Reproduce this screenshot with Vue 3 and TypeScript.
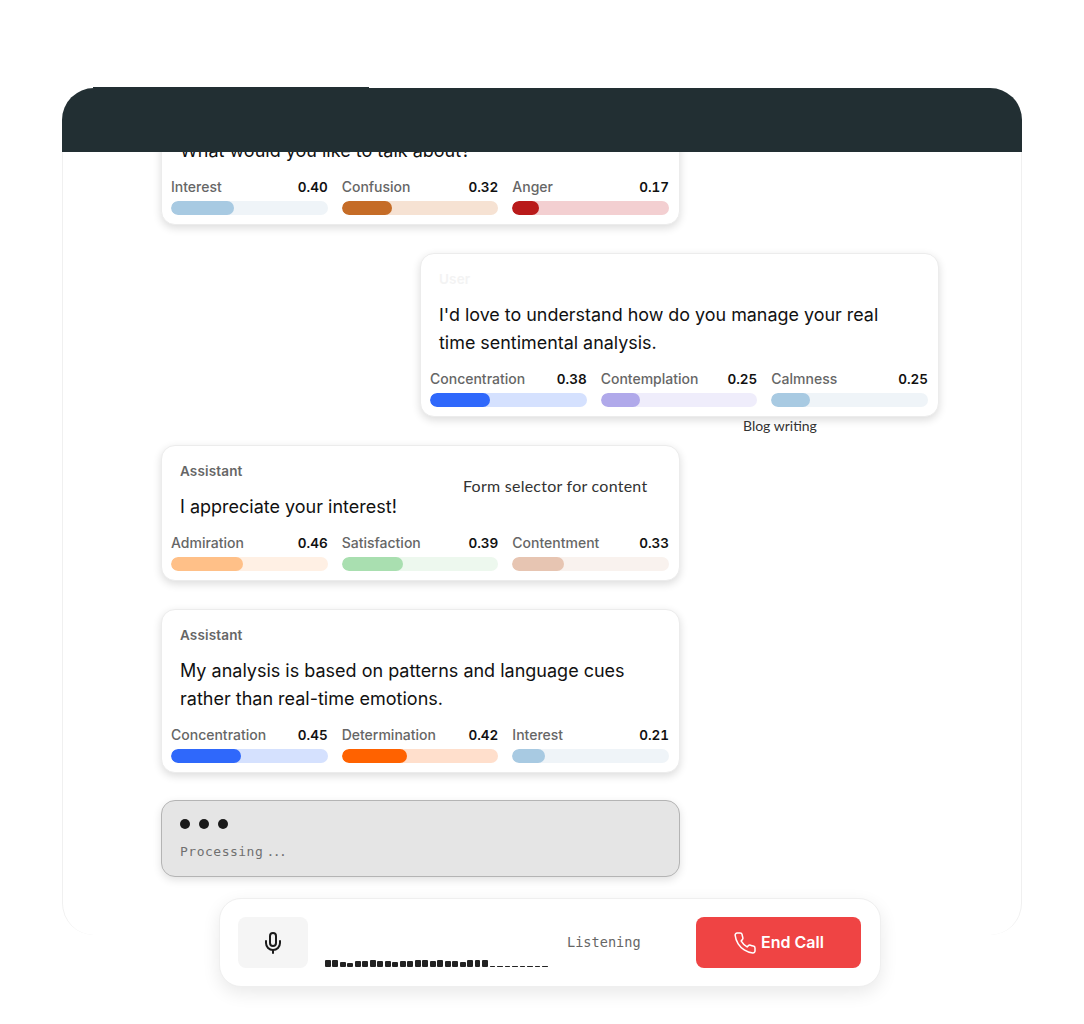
<script setup lang="ts">
interface Metric { name: string; value: number; fill: string; track: string }
interface Message { role?: string; text: string[]; user?: boolean; metrics: Metric[] }

const palette: Record<string, [string, string]> = {
  Interest: ['#a8cae2', '#eff4f8'],
  Confusion: ['#c56c27', '#f6e2d3'],
  Anger: ['#b91a1a', '#f3cfd1'],
  Concentration: ['#2f68fb', '#d5e1fe'],
  Contemplation: ['#b0a9ea', '#efedfb'],
  Calmness: ['#a8cae2', '#eff4f8'],
  Admiration: ['#ffc088', '#fff0e4'],
  Satisfaction: ['#a9dfb0', '#edf8ee'],
  Contentment: ['#e7c5b2', '#f9f2ee'],
  Determination: ['#ff6200', '#ffdfcc'],
}

const m = (name: string, value: number): Metric => ({
  name,
  value,
  fill: palette[name][0],
  track: palette[name][1],
})

const messages: Message[] = [
  {
    text: ['What would you like to talk about?'],
    metrics: [m('Interest', 0.4), m('Confusion', 0.32), m('Anger', 0.17)],
  },
  {
    role: 'User',
    user: true,
    text: ["I'd love to understand how do you manage your real", 'time sentimental analysis.'],
    metrics: [m('Concentration', 0.38), m('Contemplation', 0.25), m('Calmness', 0.25)],
  },
  {
    role: 'Assistant',
    text: ['I appreciate your interest!'],
    metrics: [m('Admiration', 0.46), m('Satisfaction', 0.39), m('Contentment', 0.33)],
  },
  {
    role: 'Assistant',
    text: ['My analysis is based on patterns and language cues', 'rather than real-time emotions.'],
    metrics: [m('Concentration', 0.45), m('Determination', 0.42), m('Interest', 0.21)],
  },
]

const wave: number[] = [7, 7, 5, 4, 6, 6, 7, 6, 6, 5, 6, 6, 7, 7, 6, 7, 6, 6, 5, 7, 7, 7, 1, 1, 1, 1, 1, 1, 1, 1]
</script>

<template>
  <div class="page">
    <div class="frame">
      <header class="head"></header>
      <div class="notch"></div>
      <div class="scroller">
        <article
          v-for="(msg, i) in messages"
          :key="i"
          class="card"
          :class="{ user: msg.user }"
        >
          <div v-if="msg.role" class="role">{{ msg.role }}</div>
          <p v-for="line in msg.text" :key="line" class="line">{{ line }}</p>
          <div class="metrics">
            <div v-for="item in msg.metrics" :key="item.name" class="metric">
              <div class="metric-top">
                <span class="metric-name">{{ item.name }}</span>
                <span class="metric-value">{{ item.value.toFixed(2) }}</span>
              </div>
              <div class="track" :style="{ background: item.track }">
                <div class="fill" :style="{ width: item.value * 100 + '%', background: item.fill }"></div>
              </div>
            </div>
          </div>
        </article>
        <div class="processing">
          <div class="dots"><i></i><i></i><i></i></div>
          <div class="processing-text">Processing <span class="ellipsis">...</span></div>
        </div>
      </div>
      <span class="tag tag-blog">Blog writing</span>
      <span class="tag tag-form">Form selector for content</span>
    </div>

    <div class="bar">
      <button class="mic" aria-label="Microphone">
        <svg width="24" height="24" viewBox="0 0 24 24" fill="none" stroke="#1c1c1c" stroke-width="2" stroke-linecap="round" stroke-linejoin="round">
          <path d="M12 2a3 3 0 0 0-3 3v7a3 3 0 0 0 6 0V5a3 3 0 0 0-3-3Z" />
          <path d="M19 10v2a7 7 0 0 1-14 0v-2" />
          <line x1="12" y1="19" x2="12" y2="22" />
        </svg>
      </button>
      <div class="wave">
        <i v-for="(h, i) in wave" :key="i" :style="{ height: h + 'px' }"></i>
      </div>
      <span class="listening">Listening</span>
      <button class="end">
        <svg width="24" height="24" viewBox="0 0 24 24" fill="none" stroke="#fff" stroke-width="1.5" stroke-linecap="round" stroke-linejoin="round">
          <path d="M22 16.92v3a2 2 0 0 1-2.18 2 19.79 19.79 0 0 1-8.63-3.07 19.5 19.5 0 0 1-6-6 19.79 19.79 0 0 1-3.07-8.67A2 2 0 0 1 4.11 2h3a2 2 0 0 1 2 1.72 12.84 12.84 0 0 0 .7 2.81 2 2 0 0 1-.45 2.11L8.09 9.91a16 16 0 0 0 6 6l1.27-1.27a2 2 0 0 1 2.11-.45 12.84 12.84 0 0 0 2.81.7A2 2 0 0 1 22 16.92Z" />
        </svg>
        <span class="end-label">End Call</span>
      </button>
    </div>
  </div>
</template>

<style>
html, body { background: #fff; }
</style>

<style scoped>
.page {
  position: relative;
  width: 1084px;
  height: 1024px;
  padding: 88px 62px 0;
  box-sizing: border-box;
  overflow: hidden;
  font-family: Inter, "Liberation Sans", sans-serif;
  color: #111;
}
.frame {
  position: relative;
  height: 847px;
  display: flex;
  flex-direction: column;
}
.head {
  flex: none;
  height: 64px;
  border-radius: 32px 32px 0 0;
  background: #222f33;
  position: relative;
  z-index: 1;
}
.notch {
  position: absolute;
  top: -1px;
  left: 31px;
  width: 276px;
  height: 1px;
  background: #222f33;
}
.scroller {
  flex: 1;
  min-height: 0;
  overflow: hidden;
  display: flex;
  flex-direction: column;
  justify-content: flex-end;
  align-items: flex-start;
  gap: 28px;
  padding: 0 0 58px 98px;
  border-left: 1px solid #f0f0f0;
  border-right: 1px solid #f0f0f0;
  border-radius: 0 0 32px 32px;
}
.card {
  flex: none;
  width: 519px;
  box-sizing: border-box;
  background: #fff;
  border: 1px solid #ececec;
  border-radius: 14px;
  padding: 15px 10px 9px 9px;
  box-shadow: 0 3px 8px rgba(0, 0, 0, 0.14);
}
.card.user { margin-left: 259px; }
.card.user .role { color: #f3f3f3; }
.card.user .line { font-size: 17.92px; }
.role {
  height: 20px;
  line-height: 20px;
  margin: 0 9px 12px;
  font-size: 13.5px;
  font-weight: 600;
  letter-spacing: 0.15px;
  color: #666;
}
.line {
  margin: 0 9px;
  font-size: 18px;
  line-height: 28px;
  color: #111;
  white-space: nowrap;
}
.metrics {
  display: grid;
  grid-template-columns: repeat(3, 1fr);
  gap: 14px;
  margin-top: 12px;
}
.metric-top {
  display: flex;
  justify-content: space-between;
  line-height: 20px;
  font-size: 14px;
  font-weight: 500;
  margin-bottom: 4px;
}
.metric-name { color: #666; }
.metric-value {
  color: #111;
  font-weight: 600;
  font-size: 13.5px;
  font-variant-numeric: tabular-nums;
}
.track {
  height: 14px;
  border-radius: 7px;
  overflow: hidden;
}
.fill {
  height: 100%;
  border-radius: 7px;
}
.processing {
  flex: none;
  width: 519px;
  height: 77px;
  margin-top: -1px;
  box-sizing: border-box;
  background: #e5e5e5;
  border: 1px solid #b4b4b4;
  border-radius: 14px;
  padding: 18px;
  box-shadow: 0 3px 8px rgba(0, 0, 0, 0.12);
}
.dots {
  display: flex;
  gap: 9px;
  height: 10px;
}
.dots i {
  width: 10px;
  height: 10px;
  border-radius: 50%;
  background: #1a1a1a;
}
.processing-text {
  margin-top: 13px;
  font-family: "DejaVu Sans Mono", monospace;
  font-size: 13px;
  line-height: 20px;
  letter-spacing: 0.5px;
  word-spacing: -5px;
  color: #707070;
}
.ellipsis { letter-spacing: -1.6px; }
.tag {
  position: absolute;
  font-family: Lato, sans-serif;
  color: #333;
  white-space: nowrap;
}
.tag-blog { left: 681px; top: 329px; font-size: 14px; }
.tag-form { left: 401px; top: 388px; font-size: 16px; letter-spacing: 0.25px; }
.bar {
  position: absolute;
  left: 219px;
  top: 898px;
  width: 662px;
  height: 89px;
  box-sizing: border-box;
  background: #fff;
  border: 1px solid #efefef;
  border-radius: 22px;
  box-shadow: 0 6px 18px rgba(0, 0, 0, 0.09);
  display: flex;
  align-items: center;
  padding: 0 19px 0 18px;
}
.mic {
  flex: none;
  width: 70px;
  height: 51px;
  border: 0;
  border-radius: 8px;
  background: #f5f5f5;
  display: flex;
  align-items: center;
  justify-content: center;
  padding: 0;
}
.wave {
  flex: none;
  width: 223px;
  margin: 40px 0 0 17px;
  display: flex;
  align-items: flex-end;
  justify-content: space-between;
  height: 9px;
}
.wave i {
  width: 5.8px;
  background: #222;
  border-radius: 1px;
}
.listening {
  margin: -2px 0 0 19px;
  font-family: "DejaVu Sans Mono", monospace;
  font-size: 13.6px;
  color: #666;
}
.end {
  margin-left: auto;
  flex: none;
  width: 165px;
  height: 51px;
  border: 0;
  border-radius: 8px;
  background: #ef4444;
  color: #fff;
  display: flex;
  align-items: center;
  justify-content: center;
  gap: 4px;
  font-family: Inter, sans-serif;
  font-size: 16px;
  font-weight: 600;
  padding: 0;
}
.end-label { margin-top: -2px; }
</style>
